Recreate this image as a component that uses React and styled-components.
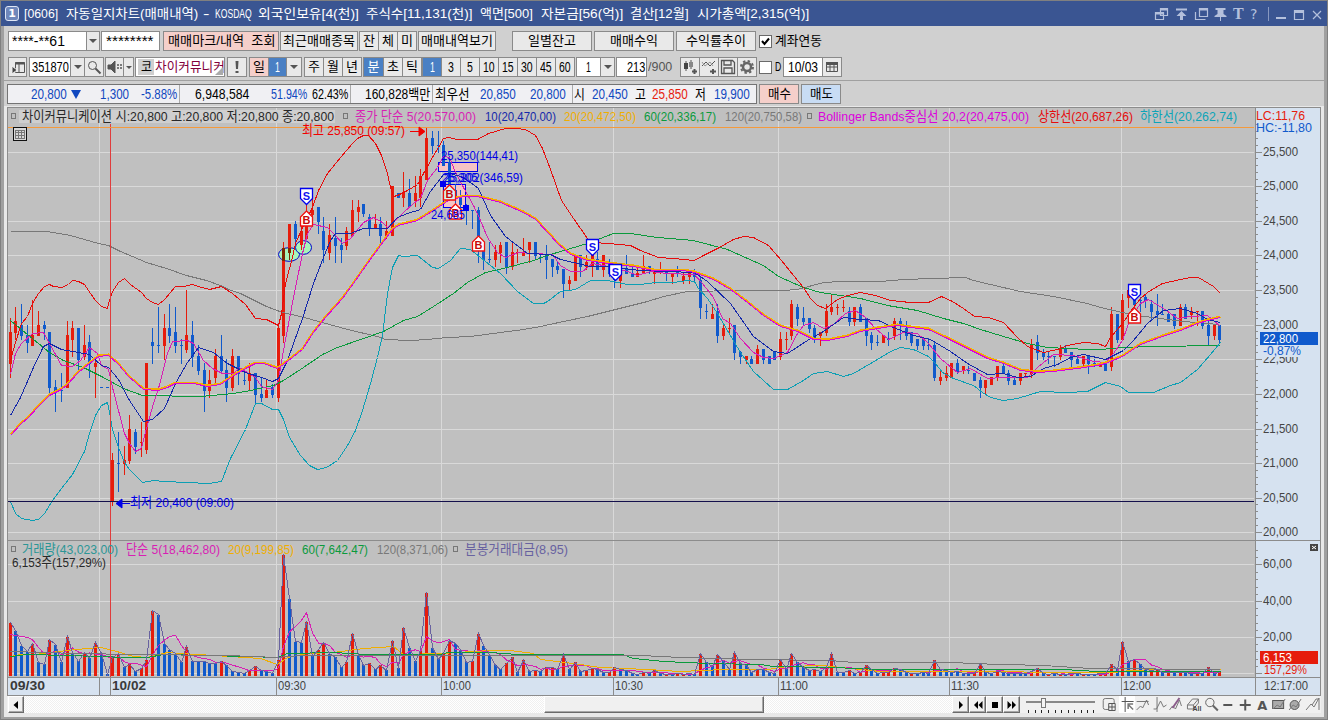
import React, { useLayoutEffect, useRef } from "react";
import styled, { createGlobalStyle, css } from "styled-components";

const FONT = `"Liberation Sans", "Noto Sans CJK KR", sans-serif`;

const Global = createGlobalStyle`
  * { box-sizing: border-box; }
  body { margin: 0; font-family: ${FONT}; font-size: 13px; overflow: hidden; }
`;

/* ---------- condensed text ---------- */
const FitBox = styled.span`
  display: inline-block;
  flex: none;
  width: ${(p) => p.$w}px;
  margin-left: ${(p) => p.$gap || 0}px;
  color: ${(p) => p.$color || "inherit"};
  white-space: nowrap;
  line-height: 16px;
`;
const FitInner = styled.span`
  display: inline-block;
  transform-origin: 0 50%;
  white-space: pre;
`;
function Fit({ w, gap, color, children }) {
  const ref = useRef(null);
  useLayoutEffect(() => {
    const natural = ref.current.offsetWidth;
    if (natural) ref.current.style.transform = `scaleX(${w / natural})`;
  }, [w, children]);
  return (
    <FitBox $w={w} $gap={gap} $color={color}>
      <FitInner ref={ref}>{children}</FitInner>
    </FitBox>
  );
}

/* ---------- window ---------- */
const Window = styled.div`
  width: 1328px;
  height: 720px;
  background: #d0d0d0;
  border: 1px solid #808080;
  display: flex;
  flex-direction: column;
`;
const TitleBar = styled.header`
  height: 25px;
  flex: none;
  background: #3a5592;
  color: #fff;
  display: flex;
  align-items: center;
  padding: 0 4px;
`;
const WindowNo = styled.span`
  width: 14px;
  height: 15px;
  border: 1px solid #dfe6f5;
  border-radius: 3px;
  background: #6f87bb;
  font: bold 11px/13px "DejaVu Sans", sans-serif;
  text-align: center;
  margin-right: 5px;
`;
const TitleIcons = styled.svg`
  margin-left: auto;
  display: block;
`;
const Frame = styled.div`
  flex: 1;
  border: 3px solid #a0a0a0;
  border-top: 0;
  border-bottom-width: 2px;
  display: flex;
  flex-direction: column;
  min-height: 0;
`;

/* ---------- toolbars ---------- */
const Toolbar = styled.div`
  display: flex;
  flex: none;
  align-items: flex-start;
  height: ${(p) => p.$h}px;
  padding: ${(p) => p.$top}px 0 0 4px;
  border-bottom: ${(p) => (p.$line ? "1px solid #a0a0a0" : "0")};
`;
const tones = {
  plain: css`background: #e9e9e9; color: #000;`,
  pink: css`background: #f5cfca; color: #000;`,
  blue: css`background: #4a80c4; color: #fff;`,
  sky: css`background: #c8dcf4; color: #000;`,
  white: css`background: #fff; color: #000;`,
};
const Box = styled.div`
  height: 20px;
  flex: none;
  width: ${(p) => p.$w}px;
  margin-left: ${(p) => p.$gap || 0}px;
  border: 1px solid #8a8a8a;
  display: flex;
  align-items: center;
  justify-content: ${(p) => p.$align || "center"};
  padding: 0 ${(p) => p.$pad || 0}px;
  ${(p) => tones[p.$tone || "plain"]}
`;
const Button = styled(Box).attrs({ as: "button", type: "button" })`
  font-family: inherit;
  font-size: ${(p) => (p.$num ? 14 : 13)}px;
`;
const Field = styled(Box).attrs({ $tone: "white" })`
  font-size: 14px;
`;
const NameField = styled(Field)`
  position: relative;
  overflow: hidden;
  font-size: 13px;
  &::after {
    content: "";
    position: absolute;
    right: 1px;
    bottom: 1px;
    border: 4px solid transparent;
    border-right-color: #aaa;
    border-bottom-color: #aaa;
  }
`;
const Arrow = styled.i`
  border: ${(p) => p.$s || 4}px solid transparent;
  border-top-color: #555;
  border-bottom-width: 0;
`;
const Check = styled.div`
  width: 13px;
  height: 13px;
  margin: 4px 0 0 ${(p) => p.$gap}px;
  border: 1px solid #6a6a6a;
  background: #fff;
  display: flex;
  flex: none;
`;
const Caption = styled.div`
  display: flex;
  align-items: center;
  height: 20px;
  margin-left: ${(p) => p.$gap}px;
  color: ${(p) => p.$color || "#000"};
`;
const Market = styled.span`
  background: #cfcfcf;
  width: 16px;
  height: 16px;
  flex: none;
  display: flex;
  align-items: center;
  justify-content: center;
  margin-right: 1px;
`;
const QuoteBox = styled.div`
  width: 750px;
  height: 20px;
  flex: none;
  border: 1px solid #747474;
  background: #f0f0f3;
  display: flex;
  align-items: center;
  margin-left: -1px;
  font-size: 14px;
`;
const Rule = styled.i`
  width: 1px;
  height: 18px;
  flex: none;
  background: #aaa;
  margin-left: ${(p) => p.$gap}px;
`;
const Down = styled.i`
  margin-left: 4px;
  border: 5px solid transparent;
  border-top: 9px solid #1048c0;
  border-bottom: 0;
`;

/* ---------- chart area ---------- */
const ChartArea = styled.main`
  flex: 1;
  background: #e8e8e8;
  padding: 1px 2px 0 3px;
  display: flex;
  flex-direction: column;
  min-height: 0;
`;
const ChartSvg = styled.svg`
  display: block;
  flex: none;
  font-family: ${FONT};
  font-size: 13.5px;
`;
const BottomBar = styled.div`
  display: flex;
  height: 17px;
  width: 1314px;
  background: #f0f0f0;
  align-items: stretch;
  padding-left: 1px;
`;
const Raised = styled.div`
  width: ${(p) => p.$w}px;
  flex: none;
  background: #f0f0f0;
  border: 1px solid;
  border-color: #fff #6a6a6a #6a6a6a #fff;
  box-shadow: inset -1px -1px #a8a8a8;
  display: flex;
  align-items: center;
  justify-content: center;
`;
const Track = styled.div`
  width: ${(p) => p.$w}px;
  flex: none;
  background: repeating-conic-gradient(#ffffff 0 25%, #f0f0f0 0 50%) 0 0 / 2px 2px;
`;

/* ---------- data ---------- */
const RED = "#e61c0c";
const BLUE = "#105acc";
// direction, high, body top, body bottom, low
const CANDLES = (
  "r 318 332 364 378|r 307 321 333 340|b 304 325 336 340|b 325 335 343 353|r 300 335 346 346|r 311 325 336 336|b 321 325 329 340|b 332 332 388 395|b 380 387 391 412|b 373 390 391 402|" +
  "r 321 335 388 388|r 321 328 340 357|b 328 328 360 371|r 325 345 357 360|b 335 342 364 378|r 359 363 367 398|b 387 387 388 388|b 387 387 388 388|r 453 460 501 506|b 432 463 464 492|" +
  "r 446 460 464 475|r 415 429 461 464|b 429 432 447 454|r 422 442 443 457|r 363 363 450 454|b 328 342 346 364|b 307 345 346 353|r 314 328 346 360|b 304 328 336 343|b 307 332 346 353|" +
  "b 339 345 346 364|r 290 335 350 353|b 321 335 357 367|b 345 356 371 375|b 363 370 391 412|r 370 380 391 398|r 349 356 378 385|b 335 356 371 374|b 359 370 388 402|r 349 356 388 391|" +
  "b 356 356 374 385|b 373 380 381 385|r 363 373 381 391|b 373 373 395 405|b 377 394 398 402|r 380 390 398 398|b 384 387 395 398|r 324 328 398 402|r 242 248 336 343|r 224 224 253 260|" +
  "b 221 224 239 250|r 225 231 245 250|r 204 224 239 239|r 197 210 215 225|b 207 207 222 234|b 217 231 250 263|r 224 235 253 260|b 217 238 246 263|b 238 245 250 263|r 227 231 246 250|" +
  "r 200 210 236 236|r 200 207 212 222|b 204 204 214 217|b 214 217 229 236|r 214 224 229 229|b 217 224 236 243|r 221 231 236 239|r 186 186 236 236|b 193 193 198 198|r 172 193 198 207|" +
  "b 179 193 207 208|r 176 193 201 207|r 169 176 198 207|r 128 138 180 180|b 131 138 146 154|b 131 145 146 153|b 141 145 166 166|b 156 162 184 200|b 184 190 198 210|b 190 197 205 215|" +
  "b 204 209 210 225|b 210 210 211 229|b 207 210 236 263|b 243 250 260 270|b 242 259 260 263|r 245 252 260 267|r 242 245 253 263|b 242 242 267 274|r 242 252 267 270|r 249 252 253 263|" +
  "r 238 252 256 256|r 242 242 250 263|b 242 242 256 260|b 253 257 258 263|b 245 255 260 279|b 259 259 267 277|b 261 266 270 274|b 269 269 284 298|r 276 280 284 291|r 254 255 281 281|" +
  "b 255 255 267 277|r 255 262 267 270|r 255 255 266 277|b 252 259 270 270|r 255 255 270 277|b 259 262 274 277|b 267 270 280 288|r 267 275 281 288|b 255 269 274 274|b 264 273 277 277|" +
  "r 266 273 277 277|r 255 266 273 274|b 266 266 269 274|r 269 269 274 284|r 262 269 270 274|b 269 269 274 281|r 273 273 277 284|b 266 270 273 277|r 273 276 281 284|r 273 273 277 284|" +
  "b 269 273 277 281|b 276 280 308 319|b 304 311 312 319|r 304 314 319 319|b 304 311 336 343|r 325 328 336 340|r 318 328 329 333|b 325 325 353 360|b 351 352 357 364|r 356 356 360 364|" +
  "b 356 359 364 364|r 345 349 364 364|b 349 349 360 364|b 356 356 364 364|b 352 352 360 360|r 332 339 357 360|r 332 339 340 350|r 300 304 336 340|b 304 307 319 326|b 307 318 322 326|" +
  "b 318 318 329 333|b 325 328 339 343|r 332 332 336 346|r 304 311 333 336|r 294 307 312 315|r 304 307 308 315|r 300 307 308 312|b 307 311 322 326|r 307 307 322 326|b 304 307 322 322|" +
  "b 318 318 336 346|b 332 335 343 350|b 335 342 343 346|r 335 335 343 343|b 332 339 340 346|r 318 321 336 340|b 318 321 326 340|b 321 328 336 340|b 332 332 343 346|b 339 339 346 350|" +
  "b 339 339 346 350|b 338 345 346 350|b 342 345 378 381|r 370 377 381 385|r 366 373 378 381|r 363 363 378 378|b 359 363 372 374|r 366 366 371 374|b 366 370 371 374|b 373 373 381 381|" +
  "b 377 380 388 398|r 380 380 388 395|r 377 377 385 385|r 366 366 378 381|b 363 366 374 374|b 370 373 381 385|b 377 380 385 385|r 373 373 381 385|r 373 373 374 378|r 339 345 374 378|" +
  "b 335 342 353 360|b 349 352 357 360|b 352 356 357 364|b 356 356 357 367|r 345 349 357 360|b 345 349 353 353|b 352 352 360 367|b 356 359 364 364|r 356 356 364 367|b 356 356 364 374|" +
  "b 359 363 364 367|r 363 363 367 367|b 363 363 371 371|r 307 314 367 371|b 314 314 340 343|r 294 300 340 340|r 288 290 298 308|b 295 298 305 310|b 297 300 301 312|b 294 297 301 308|" +
  "b 300 304 312 320|b 294 311 315 326|b 304 314 315 315|b 311 314 322 322|b 314 314 326 329|r 304 307 326 326|b 304 307 319 319|r 307 311 315 319|r 311 311 312 326|b 311 311 326 329|" +
  "b 321 325 336 346|r 325 325 336 340|b 325 325 340 343"
).split("|").map((s) => s.split(" "));

const VOLUMES = (
  "r53 b45 b30 b24 r32 b14 b12 r36 b31 b14 r39 b23 b15 r23 b18 r33 b22 b2 r19 r22 b9 r12 b5 r8 r16 r65 b61 b32 b26 b22 b14 r29 b15 b15 b15 b13 b13 r15 b11 b5 b4 b3 r6 r10 b6 b5 b3 r16 r121 b77 " +
  "b34 b33 r54 b20 r26 r33 b22 b19 b9 r14 r42 b21 b11 r13 b7 r11 b6 r35 b8 r48 b28 b15 r25 r83 b28 b17 r22 r35 b32 b26 b14 r15 r42 b30 b21 b11 b7 r13 r19 b4 r16 b5 r6 b5 r9 r9 b7 r21 b7 r14 " +
  "b5 r6 r8 b7 b4 r4 r9 b7 b6 b3 b2 r4 b3 r6 b3 r2 b2 r3 r2 b3 b2 r22 b14 b10 r21 b15 b7 r23 b13 b11 b4 r7 b7 b4 b3 r17 b7 r22 b14 b9 b6 r7 b5 r9 r22 b4 b4 r6 b3 r4 " +
  "r11 b7 b3 r4 r4 r8 b7 b4 r3 b3 b4 b3 r16 b7 b6 b4 b5 b3 b3 r3 r13 b4 b3 r5 b4 b3 b3 b3 b3 r5 r8 b3 r2 b3 r2 b2 r3 b3 r2 b2 b2 r3 r3 r12 b7 r34 b15 r17 b12 b7 " +
  "r6 r7 b4 r4 b4 r4 b4 b3 r3 b3 r9 b3 r4"
).split(" ").map((s) => ({ up: s[0] === "r", v: +s.slice(1) }));

const col = (i) => Math.floor(10 + 5.7075 * i);
const BASE = 676;
const turnover = VOLUMES.map((d, i) => `${col(i)},${BASE - d.v - (d.v > 20 ? 1 : 0)}`).join(" ");
const volMa5 = VOLUMES.map((_, i) => {
  const part = VOLUMES.slice(Math.max(0, i - 4), i + 1);
  const avg = i < 4 ? 42 - i : part.reduce((a, d) => a + d.v, 0) / part.length;
  return `${col(i)},${(BASE - avg).toFixed(1)}`;
}).join(" ");

const MID =
  "10,434 21,422 27,417 38,405 49,394 61,388 67,383 78,371 89,362 98,355 108,354 118,363 128,375 143,388 158,389 167,386 175,382 193,382 207,385 220,383 232,375 245,367 255,362 263,362 277,367 283,363 302,348 313,331 325,316 342,297 353,282 367,262 383,240 392,228 398,224 417,219 433,209 448,199 463,195 477,195 500,201 523,211 535,218 550,234 557,242 570,253 587,259 608,262 633,265 653,269 683,269 694,271 713,278 730,288 747,301 763,314 780,325 797,330 813,338 827,339 847,335 860,330 877,327 897,324 910,326 928,328 947,337 967,347 987,357 1003,362 1020,369 1037,371 1053,370 1077,367 1097,364 1105,362 1122,355 1140,343 1162,335 1180,329 1197,322 1207,319 1220,316";

const LINES = [
  { c: "#787878", p: "10,231 46,231 58,233 70,235 84,239 98,243 108,245 120,251 132,256 146,262 166,268 186,275 206,280 220,285 228,289 240,293 254,300 266,306 282,312 300,316 322,322 347,329 377,336 385,339 410,340 427,339 447,337 470,336 500,332 523,329 540,326 563,321 587,316 607,311 627,306 647,301 663,296 687,291 740,290 783,290 797,289 823,282 840,281 880,281 903,279 933,278 965,277 973,280 990,284 1020,291 1053,296 1087,303 1100,307 1122,312 1137,315 1160,318 1183,321 1210,323 1220,325" },
  { c: "#0a9a3c", p: "10,320 27,334 38,343 49,352 63,360 83,367 101,376 112,382 123,388 142,395 200,396 233,393 250,390 273,385 283,380 300,369 322,354 337,347 363,338 383,331 403,320 417,316 433,306 453,293 467,282 485,272 503,268 533,260 550,254 560,251 587,243 600,238 613,233 630,233 657,237 693,240 727,249 747,258 763,265 778,276 803,287 820,292 840,295 860,298 887,305 917,310 943,318 963,323 980,329 1003,336 1027,343 1047,347 1087,349 1100,349 1123,347 1153,346 1220,345" },
  { c: "#0c9fb4", p: "10,501 15,513 21,518 32,520 38,519 44,513 52,500 61,488 72,474 84,451 89,433 95,415 101,405 107,402 109,412 112,429 118,447 124,462 129,469 142,482 153,480 164,481 209,483 221,481 230,458 245,429 255,403 261,403 272,409 278,409 283,419 289,437 300,455 309,465 317,469 326,467 337,460 347,445 355,430 362,410 370,383 377,357 382,335 387,293 392,267 398,255 403,256 417,255 432,267 438,268 450,260 460,248 470,249 490,265 500,273 517,291 533,303 543,303 547,301 560,291 575,289 590,280 607,280 627,284 640,284 655,282 673,282 687,280 694,281 698,288 707,298 717,313 727,330 734,342 740,352 753,371 773,389 787,389 803,380 813,373 827,371 843,376 853,373 877,359 890,351 900,347 913,349 928,356 935,363 942,372 953,378 973,385 982,392 990,397 1003,400 1017,398 1040,391 1067,392 1087,391 1105,382 1120,386 1128,392 1153,392 1170,385 1180,382 1197,369 1210,354 1220,342" },
  { c: "#d81eb4", p: "10,374 15,353 21,343 32,333 43,332 49,343 61,365 72,366 80,360 89,347 97,353 101,365 108,369 112,387 118,410 124,433 129,443 135,451 141,448 146,428 153,403 158,388 167,353 172,341 187,340 193,343 203,360 212,368 222,373 233,373 239,367 247,372 255,377 261,386 272,389 278,380 283,350 293,297 302,253 307,233 313,224 327,227 335,235 342,243 350,238 363,222 373,217 382,222 387,227 393,222 403,212 413,203 420,198 427,180 437,167 443,156 449,157 455,172 463,187 473,205 480,220 487,237 497,252 505,257 518,252 533,253 552,254 560,265 570,271 582,271 592,263 608,266 627,271 637,275 650,271 667,273 694,274 702,283 713,297 722,318 730,323 740,338 753,352 763,357 773,358 787,352 797,333 803,325 813,322 823,328 833,324 845,313 855,310 865,317 875,328 888,339 903,332 917,333 928,343 940,358 957,372 970,368 987,378 1003,377 1027,377 1037,367 1053,354 1073,355 1093,361 1105,362 1113,353 1122,340 1130,318 1140,303 1148,299 1163,308 1177,318 1190,316 1207,315 1213,320 1220,326" },
  { c: "#1428aa", p: "10,415 20,397 33,367 43,346 49,343 61,349 78,352 89,354 101,365 108,367 118,379 129,400 143,421 152,419 164,408 175,383 187,362 198,347 213,352 227,363 245,372 261,377 272,381 278,378 287,360 293,343 302,318 313,283 323,257 330,240 335,233 350,233 363,228 387,228 397,217 407,213 420,209 430,191 443,174 450,173 463,177 478,188 490,215 505,236 527,253 550,254 560,259 573,262 590,266 608,266 623,268 640,270 667,271 694,272 707,281 730,303 753,336 773,351 787,353 807,340 823,331 843,317 860,319 878,320 893,327 913,335 930,339 950,351 967,363 987,374 1003,373 1017,377 1030,376 1043,368 1057,364 1070,357 1083,354 1105,359 1123,350 1133,340 1147,323 1163,310 1180,308 1197,313 1207,319 1220,322" },
  { c: "#f4ac00", p: MID, w: 2 },
  { c: "#dc00dc", p: MID, dy: 1 },
  { c: "#e60c0c", p: "10,360 15,342 21,323 27,316 32,303 38,293 44,286 49,284 53,286 61,287 68,284 72,280 78,281 84,284 90,293 95,300 101,306 107,308 109,300 112,291 118,282 124,278 130,284 141,292 146,298 152,302 158,304 164,299 175,286 183,286 192,284 198,286 209,289 221,286 232,293 245,304 255,318 266,319 278,325 281,313 285,283 292,257 295,243 302,227 312,207 318,190 327,173 340,157 352,143 357,138 363,135 368,135 375,143 381,155 387,173 390,187 393,196 397,195 407,190 417,184 423,173 432,157 438,147 443,138 448,137 457,139 477,139 488,133 505,128 516,128 525,129 535,135 542,148 550,169 561,200 567,209 573,218 587,238 593,242 608,243 630,245 640,250 658,257 673,258 694,260 703,255 717,248 733,239 743,236 753,237 768,245 781,260 793,275 803,287 810,298 817,305 825,308 837,299 847,295 860,292 875,295 890,300 910,302 928,302 941,296 952,301 963,308 974,316 988,317 1003,322 1017,337 1027,346 1043,352 1057,349 1067,345 1083,342 1097,343 1105,346 1110,337 1122,323 1133,307 1140,298 1147,292 1162,283 1180,279 1190,277 1198,277 1213,286 1220,293" },
];

const VOL_LINES = [
  { c: "#f0ae00", p: "10,656 20,654 35,654 67,650 87,648 100,647 113,650 133,656 147,657 167,652 197,654 230,656 260,658 277,664 287,657 307,653 333,652 363,648 393,646 403,654 440,653 490,650 510,650 533,653 540,659 573,663 600,667 647,669 680,671 723,669 767,669 787,666 823,665 850,668 880,671 930,671 1113,672 1130,670 1157,669 1220,669" },
  { c: "#0a9a3c", p: "10,656 27,654 67,655 127,657 147,657 163,654 247,656 277,657 287,653 333,652 367,654 440,654 447,652 490,652 517,654 622,654 633,658 663,661 707,663 760,664 773,666 833,667 880,669 1063,669 1097,671 1220,671" },
  { c: "#787878", p: "10,651 77,653 133,654 227,655 277,657 300,655 440,655 640,655 680,657 753,659 830,660 853,662 957,662 967,663 1043,665 1090,668 1220,669" },
];

const GRID_Y = [152, 186, 221, 255, 290, 325, 359, 394, 429, 463, 498, 532];
const PRICES = ["25,500", "25,000", "24,500", "24,000", "23,500", "23,000", "22,500", "22,000", "21,500", "21,000", "20,500", "20,000"];
const VOL_Y = [564, 601, 637, 673];
const TIMES = [
  [276, "09:30"],
  [441, "10:00"],
  [613, "10:30"],
  [778, "11:00"],
  [949, "11:30"],
  [1121, "12:00"],
];
// text, width, space before it
const TITLE = [
  ["[0606]", 34, 0],
  ["자동일지차트(매매내역)", 132, 8],
  ["-", 6, 5],
  ["KOSDAQ", 37, 6],
  ["외국인보유[4(천)]", 101, 6],
  ["주식수[11,131(천)]", 107, 7],
  ["액면[500]", 53, 7],
  ["자본금[56(억)]", 82, 8],
  ["결산[12월]", 59, 7],
  ["시가총액[2,315(억)]", 112, 8],
];

/* ---------- chart pieces ---------- */
const T = ({ x, y, w, c, b, children }) => (
  <text x={x} y={y} textLength={w} lengthAdjust="spacingAndGlyphs" fill={c} fontWeight={b ? "bold" : "normal"}>
    {children}
  </text>
);
const Bullet = ({ x, y }) => <rect x={x + 0.5} y={y + 0.5} width="4" height="5" fill="none" stroke="#777" />;
const Sell = ({ x, y }) => (
  <g>
    <path d={`M${x - 6} ${y}h12v10l-6 6l-6-6z`} fill="#fff" stroke="#0000f0" strokeWidth="1.3" />
    <text x={x} y={y + 11} textAnchor="middle" fontSize="11" fontWeight="bold" fill="#1414f0">S</text>
  </g>
);
const Buy = ({ x, y, fill = "#fff" }) => (
  <g>
    <path d={`M${x - 6} ${y + 15}h12v-9l-6-6l-6 6z`} fill={fill} stroke="#f01010" strokeWidth="1.3" />
    <text x={x} y={y + 13} textAnchor="middle" fontSize="11" fontWeight="bold" fill="#c80808">B</text>
  </g>
);
const Pane = ({ series }) =>
  series.map((l, i) => (
    <polyline key={i} points={l.p} fill="none" stroke={l.c} strokeWidth={l.w || 1} transform={l.dy ? `translate(0 ${l.dy})` : undefined} />
  ));

function Chart() {
  return (
    <ChartSvg width="1314" height="589" viewBox="7 107 1314 589">
      <g shapeRendering="crispEdges">
        <rect x="7" y="107" width="1314" height="589" fill="#8c8c8c" />
        <rect x="8" y="108" width="1247" height="432" fill="#c0c0c0" />
        <rect x="8" y="541" width="1247" height="136" fill="#c0c0c0" />
        <rect x="1256" y="108" width="64" height="432" fill="#d6e2f0" />
        <rect x="1256" y="541" width="64" height="136" fill="#d6e2f0" />
        <rect x="8" y="678" width="1247" height="17" fill="#d6e2f0" />
        <rect x="1256" y="678" width="64" height="17" fill="#d6e2f0" />
        <g fill="#d9d9d9">
          {GRID_Y.concat(VOL_Y).map((y) => <rect key={y} x="8" y={y} width="1246" height="1" />)}
          {[99].concat(TIMES.map((t) => t[0])).map((x) => (
            <React.Fragment key={x}>
              <rect x={x} y="108" width="1" height="432" />
              <rect x={x} y="541" width="1" height="136" />
            </React.Fragment>
          ))}
        </g>
        <g fill="#8c8c8c">
          {[99, 110].concat(TIMES.map((t) => t[0])).map((x) => <rect key={x} x={x} y="678" width="1" height="17" />)}
          {GRID_Y.map((y) => (
            <React.Fragment key={y}>
              <rect x="1256" y={y} width="6" height="1" />
              {[7, 14, 21, 28].map((d) => <rect key={d} x="1256" y={y - d} width="2" height="1" />)}
            </React.Fragment>
          ))}
          {VOL_Y.map((y) => (
            <React.Fragment key={y}>
              <rect x="1256" y={y} width="6" height="1" />
              {(y === 564 ? [7, 14] : [7, 14, 22, 29]).map((d) => <rect key={d} x="1256" y={y - d} width="2" height="1" />)}
            </React.Fragment>
          ))}
        </g>
        <rect x="19" y="110" width="316" height="13" fill="#cfcfcf" />
        <rect x="438.5" y="162.5" width="39" height="9" fill="#f5c4c4" stroke="#0000f0" />
        <rect x="443.5" y="184.5" width="22" height="23" fill="#f5c4c4" stroke="#0000f0" />
      </g>
      <ellipse cx="289" cy="254.5" rx="10.5" ry="6.8" fill="#a8f4b8" stroke="#0000d0" />
      <ellipse cx="303.5" cy="247.5" rx="8" ry="6.8" fill="#a8f4b8" stroke="#0000d0" />
      <g shapeRendering="crispEdges">
        {CANDLES.map(([k, h, t, b, l], i) => (
          <g key={i} fill={k === "r" ? RED : BLUE}>
            <rect x={col(i)} y={h} width="1" height={l - h} />
            <rect x={col(i) - 1} y={t} width="3" height={b - t} />
          </g>
        ))}
        <rect x="282" y="248" width="3" height="13" fill="#7c2800" />
        <rect x="288" y="248" width="3" height="5" fill="#7c2800" />
        <rect x="289" y="253" width="1" height="7" fill="#7c2800" />
        <g transform="translate(0.5 0.5)"><Pane series={LINES} /></g>
        {VOLUMES.map((d, i) => (
          <rect key={i} x={col(i) - 1} y={BASE - d.v} width="3" height={d.v} fill={d.up ? RED : BLUE} />
        ))}
        <g transform="translate(0.5 0.5)">
          <polyline points={volMa5} fill="none" stroke="#d81eb4" />
          <Pane series={VOL_LINES} />
          <polyline points={turnover} fill="none" stroke="#6862a0" />
        </g>
        <rect x="110" y="124" width="1" height="553" fill="#e03c3c" />
        <rect x="8" y="127" width="1246" height="1" fill="#f49a3c" />
        <rect x="8" y="501" width="1246" height="1" fill="#14104c" />
        <rect x="13.5" y="127.5" width="13" height="13" fill="#d8d8d8" stroke="#111" />
        <path d="M15.5 130.5h9v8h-9zM15 132.5h10M15 135.5h10M18.5 130v9M21.5 130v9" fill="none" stroke="#777" />
      </g>

      <Bullet x={11} y={113} />
      <T x={22} y={121} w={312} c="#282828">차이커뮤니케이션 시:20,800 고:20,800 저:20,800 종:20,800</T>
      <Bullet x={343} y={113} />
      <T x={355} y={121} w={121} c="#d81eb4">종가 단순 5(20,570,00)</T>
      <T x={485} y={121} w={71} c="#1428aa">10(20,470,00)</T>
      <T x={564} y={121} w={72} c="#f0ae00">20(20,472,50)</T>
      <T x={644} y={121} w={72} c="#0a9a3c">60(20,336,17)</T>
      <T x={725} y={121} w={77} c="#787878">120(20,750,58)</T>
      <Bullet x={807} y={113} />
      <T x={818} y={121} w={211} c="#dc00dc">Bollinger Bands중심선 20,2(20,475,00)</T>
      <T x={1038} y={121} w={95} c="#e60c0c">상한선(20,687,26)</T>
      <T x={1140} y={121} w={97} c="#0ca4b8">하한선(20,262,74)</T>

      <T x={302} y={135} w={103} c="#f00000">최고 25,850 (09:57)</T>
      <path d="M410 131.5h9M419 127v9l6-4.500z" fill="#f00000" stroke="#f00000" />
      <T x={130} y={507} w={104} c="#0000e6">최저 20,400 (09:00)</T>
      <path d="M130 503.500h-9M122 499v9l-6-4.500z" fill="#0000e6" stroke="#0000e6" />
      <T x={441} y={160} w={77} c="#0000e6">25,350(144,41)</T>
      <T x={442} y={182} w={36} c="#0000e6">25,305</T>
      <T x={444} y={182} w={79} c="#0000e6">25,202(346,59)</T>
      <Buy x={455.500} y={204} />
      <T x={431} y={219} w={34} c="#0000e6">24,685</T>
      <rect x="440" y="181" width="6" height="6" fill="#0000f0" />
      <rect x="463" y="205" width="6" height="6" fill="#0000f0" />
      <Buy x={306.500} y={211} />
      <Buy x={449.500} y={185} fill="#d8f8f4" />
      <Buy x={478.500} y={236} />
      <Buy x={1134.500} y={308} />
      <Sell x={306.500} y={188.500} />
      <Sell x={592.500} y={239.500} />
      <Sell x={615.500} y={264.500} />
      <Sell x={1134.500} y={284.500} />

      <T x={1256} y={120} w={49} c="#e61c0c">LC:11,76</T>
      <T x={1256} y={132} w={56} c="#105acc">HC:-11,80</T>
      {PRICES.map((p, i) => <T key={p} x={1263} y={GRID_Y[i] + 4} w={35} c="#444">{p}</T>)}
      <rect x="1260" y="332" width="58" height="13" fill="#105acc" />
      <T x={1263} y={343} w={35} c="#fff">22,800</T>
      <rect x="1260" y="345" width="58" height="12" fill="#d6e2f0" />
      <T x={1263} y={355} w={38} c="#105acc">-0,87%</T>

      <Bullet x={11} y={546} />
      <T x={22} y={554} w={96} c="#2c9696">거래량(43,023,00)</T>
      <T x={126} y={554} w={94} c="#d81eb4">단순 5(18,462,80)</T>
      <T x={228} y={554} w={66} c="#f0ae00">20(9,199,85)</T>
      <T x={302} y={554} w={66} c="#0a9a3c">60(7,642,47)</T>
      <T x={377} y={554} w={71} c="#787878">120(8,371,06)</T>
      <Bullet x={453} y={546} />
      <T x={465} y={554} w={103} c="#6862a0">분봉거래대금(8,95)</T>
      <T x={12} y={567} w={94} c="#282828">6,153주(157,29%)</T>
      <T x={1263} y={568} w={29} c="#444">60,00</T>
      <T x={1263} y={605} w={29} c="#444">40,00</T>
      <T x={1263} y={641} w={29} c="#444">20,00</T>
      <rect x="1260" y="651" width="58" height="13" fill="#e61c0c" />
      <T x={1263} y={662} w={29} c="#fff">6,153</T>
      <T x={1264} y={674} w={43} c="#e61c0c">157,29%</T>
      <rect x="1310" y="544" width="8" height="7" fill="#444" />
      <path d="M1312 546l4 3M1316 546l-4 3" stroke="#fff" />

      <T x={10} y={690} w={35} c="#3a3a3a" b>09/30</T>
      <T x={112} y={690} w={34} c="#3a3a3a" b>10/02</T>
      {TIMES.map(([x, t]) => <T key={t} x={x + 2} y={690} w={28} c="#444">{t}</T>)}
      <T x={1264} y={690} w={44} c="#444">12:17:00</T>
    </ChartSvg>
  );
}

/* ---------- icons ---------- */
const IconSvg = styled.svg`
  flex: none;
`;
const Icon = ({ w = 16, h = 16, children }) => (
  <IconSvg width={w} height={h} viewBox={`0 0 ${w} ${h}`} fill="none" stroke="#555">{children}</IconSvg>
);

function BottomTools() {
  return (
    <svg width="302" height="17" viewBox="1019 696 302 17" fill="none" stroke="#777">
      <g shapeRendering="crispEdges">
        <rect x="1025" y="701" width="69" height="2" fill="#888" stroke="none" />
        <rect x="1041" y="698" width="4" height="10" fill="#f4f4f4" stroke="#777" strokeWidth="1" />
        {[1027, 1034, 1040, 1047, 1054, 1060, 1067, 1073, 1080, 1086, 1092].map((x) => (
          <rect key={x} x={x} y="710" width="1" height="3" fill="#222" stroke="none" />
        ))}
        <rect x="1118" y="696" width="16" height="17" fill="#fff" stroke="none" />
      </g>
      <rect x="1102.500" y="698.500" width="11" height="11" rx="2" />
      <path d="M1108 703.500h6.500v7h-6.500zM1108 707h6.500M1111.300 703v7" fill="#f0f0f0" stroke="#555" />
      <path d="M1121 701.500h12M1124.500 697v15" stroke="#555" />
      <path d="M1127.500 704.500l5 5M1127.500 709v-5h5" strokeWidth="1.500" />
      <path d="M1136 701.500h12M1136 710l4-4 2 2 4-8 2 5" strokeDasharray="12 0" />
      <path d="M1156.500 697v15M1153 709h3l4-8 3 6 3-2" />
      <path d="M1169 710l3-4 3 3 4-9 2 6" /><path d="M1172 708l7-10" stroke="#8a5c8a" strokeWidth="2" />
      <path d="M1187 705l5-6h6l-5 6h-6zM1187 705v4h6v-4M1193 709l5-6v-4" />
      <text x="1192" y="711" fontSize="7" fontWeight="bold" fill="#444" stroke="none">All</text>
      <circle cx="1209.500" cy="702.500" r="4.200" stroke="#666" /><path d="M1212.500 705.500l5 5" strokeWidth="2" stroke="#666" />
      <path d="M1223 705h9M1239.500 705h11M1245 699.500v11" strokeWidth="2" stroke="#555" />
      <text x="1257" y="710" fontSize="13" fontWeight="bold" fill="#555" stroke="none" fontFamily="DejaVu Sans">A</text>
      <rect x="1272.500" y="700.500" width="11" height="8" fill="#aaa" stroke="#555" />
      <path d="M1273 709l4-4 3 2 5-8" />
      <circle cx="1294.500" cy="705" r="4.500" fill="#aaa" stroke="#555" /><path d="M1289 710l4-5 3 2 5-8" />
      <path d="M1306 710l5-6 3 3 5-9v12M1312 705l4-6 3 0" />
    </svg>
  );
}

export default function App() {
  return (
    <Window>
      <Global />
      <TitleBar>
        <WindowNo>1</WindowNo>
        {TITLE.map(([text, w, gap]) => <Fit key={text} w={w} gap={gap}>{text}</Fit>)}
        <TitleIcons width="170" height="20" viewBox="1152 3 170 20" fill="none" stroke="#b4c0dc" strokeWidth="1.2">
          <path d="M1159.500 7.500h7v7h-7zM1154.500 11.500h8v7h-8z" fill="#3a5592" />
          <path d="M1159 8.500h8M1154 12.500h8M1175 8.500h11" strokeWidth="2" />
          <path d="M1180.500 10l5 5h-3.500v4h-3v-4h-3.500z" fill="#b4c0dc" stroke="none" />
          <path d="M1198.500 7.500h8v8h-8zM1194.500 11v7.500h10" />
          <path d="M1198 8.500h9" strokeWidth="2" />
          <path d="M1214.500 7h10v2h-2v4l3 2v1h-12v-1l3-2v-4h-2zM1219 16h1v4h-1z" fill="#b4c0dc" stroke="none" />
          <text x="1232" y="18" fontFamily="Liberation Serif" fontSize="16" fontWeight="bold" fill="#b4c0dc" stroke="none">T</text>
          <text x="1249" y="18" fontFamily="DejaVu Sans" fontSize="14" fill="#b4c0dc" stroke="none">?</text>
          <path d="M1267.500 6v14" strokeWidth="1" stroke="#8898c0" />
          <path d="M1275 17h10" strokeWidth="2" />
          <path d="M1293.500 9.500h9v9h-9z" /><path d="M1293 10.500h10" strokeWidth="3" />
          <path d="M1312 10l8 8M1320 10l-8 8" />
        </TitleIcons>
      </TitleBar>
      <Frame>
        <Toolbar $h={26} $top={5}>
          <Field $w={79} $align="flex-start" $pad={3}><Fit w={53}>****-**61</Fit></Field>
          <Button $w={14} $gap={-1}><Arrow /></Button>
          <Field $w={59} $gap={1} $align="flex-start" $pad={4}><Fit w={48}>********</Fit></Field>
          <Button $w={116} $gap={3} $tone="pink"><Fit w={108}>매매마크/내역  조회</Fit></Button>
          <Button $w={78} $gap={1}><Fit w={72}>최근매매종목</Fit></Button>
          <Button $w={20} $gap={1}><Fit w={12}>잔</Fit></Button>
          <Button $w={20} $gap={-1}><Fit w={12}>체</Fit></Button>
          <Button $w={20} $gap={-1}><Fit w={12}>미</Fit></Button>
          <Button $w={78} $gap={1}><Fit w={72}>매매내역보기</Fit></Button>
          <Button $w={80} $gap={16}><Fit w={48}>일별잔고</Fit></Button>
          <Button $w={80} $gap={2}><Fit w={48}>매매수익</Fit></Button>
          <Button $w={80} $gap={2}><Fit w={60}>수익률추이</Fit></Button>
          <Check $gap={3}><Icon w={11} h={11}><path d="M2 5l2.500 3L9 2.500" stroke="#000" strokeWidth="2" /></Icon></Check>
          <Caption $gap={3}><Fit w={47}>계좌연동</Fit></Caption>
        </Toolbar>
        <Toolbar $h={29} $top={5} $line>
          <Button $w={19}><Icon><path d="M5.500 3.500h9v10h-9zM9 3v10" /><path d="M5 4.500h10" strokeWidth="2" /><path d="M2 7l5 4-5 4z" fill="#444" stroke="#eee" /></Icon></Button>
          <Field $w={42} $gap={2}><Fit w={37}>351870</Fit></Field>
          <Button $w={15} $gap={-1}><Arrow /></Button>
          <Button $w={20} $gap={-1}><Icon><circle cx="6.500" cy="6.500" r="4" /><path d="M9.500 9.500l5 5" strokeWidth="2" /></Icon></Button>
          <Button $w={19} $gap={1}><Icon><path d="M1 6h3l4-4v12l-4-4H1z" fill="#555" /><path d="M10 6h2M10 9h2M13 6h2M13 9h2" strokeWidth="1.500" /></Icon></Button>
          <Button $w={11} $gap={-1}><Arrow $s={3} /></Button>
          <NameField $w={90} $gap={1} $align="flex-start" $pad={2}><Market><Fit w={11}>코</Fit></Market><Fit w={70} color="#82003c">차이커뮤니커</Fit></NameField>
          <Button $w={20} $gap={2}><Icon><path d="M6.500 2h3l-.5 8h-2zM6.500 12h3v2h-3z" fill="#555" stroke="none" /></Icon></Button>
          <Button $w={20} $gap={2} $tone="pink"><Fit w={12}>일</Fit></Button>
          <Button $w={19} $gap={-1} $tone="blue" $num><Fit w={5}>1</Fit></Button>
          <Button $w={16} $gap={-1}><Arrow /></Button>
          <Button $w={20} $gap={2}><Fit w={12}>주</Fit></Button>
          <Button $w={20} $gap={-1}><Fit w={12}>월</Fit></Button>
          <Button $w={20} $gap={-1}><Fit w={12}>년</Fit></Button>
          <Button $w={21} $gap={1} $tone="blue"><Fit w={12}>분</Fit></Button>
          <Button $w={20} $gap={-1}><Fit w={12}>초</Fit></Button>
          <Button $w={20} $gap={-1}><Fit w={12}>틱</Fit></Button>
          <Button $w={20} $gap={0} $tone="blue" $num><Fit w={5}>1</Fit></Button>
          {["3", "5", "10", "15", "30", "45", "60"].map((n) => (
            <Button key={n} $w={20} $gap={-1} $num><Fit w={6 * n.length}>{n}</Fit></Button>
          ))}
          <Field $w={25} $gap={1}><Fit w={5}>1</Fit></Field>
          <Button $w={15} $gap={-1}><Arrow /></Button>
          <Field $w={31} $gap={1} $align="flex-end" $pad={1}><Fit w={18}>213</Fit></Field>
          <Caption $gap={1} $color="#555"><Fit w={24}>/900</Fit></Caption>
          <Button $w={20} $gap={8}><Icon><path d="M4 2v10M9 1v9" /><path d="M2 4h4v6H2z" fill="#444" stroke="none" /><path d="M7 3h4v5H7z" fill="#888" stroke="none" /><path d="M10 12.500h5M12.500 10v5" strokeWidth="2" /></Icon></Button>
          <Button $w={20} $gap={-1}><Icon><path d="M1 7l4-4 4 4 5-5" /><path d="M1 3l3 4 5-4 3 4" stroke="#999" /><path d="M9 12.500h6M12 10v5" strokeWidth="2" /></Icon></Button>
          <Button $w={20} $gap={-1}><Icon><path d="M1.500 1.500h11l2 2v11h-13zM4 2v4h7V2M4 14V9h8v5" strokeWidth="1.300" /></Icon></Button>
          <Button $w={20} $gap={-1}><Icon><circle cx="8" cy="8" r="4" strokeWidth="2.500" stroke="#666" /><circle cx="8" cy="8" r="6" strokeWidth="2" strokeDasharray="2.400 2.300" stroke="#666" /></Icon></Button>
          <Check $gap={2} />
          <Caption $gap={3}><Fit w={6}>D</Fit></Caption>
          <Field $w={40} $gap={2}><Fit w={30}>10/03</Fit></Field>
          <Button $w={20} $gap={-1}><Icon><path d="M2.500 3.500h11v9h-11zM2 8h11M6 5v8M10 5v8" /><path d="M2 4.500h12" strokeWidth="3" /></Icon></Button>
        </Toolbar>
        <Toolbar $h={25} $top={3}>
          <QuoteBox>
            <Fit w={36} gap={23} color="#1048c0">20,800</Fit><Down />
            <Fit w={29} gap={19} color="#1048c0">1,300</Fit>
            <Fit w={36} gap={12} color="#1048c0">-5.88%</Fit><Rule $gap={2} />
            <Fit w={54} gap={15}>6,948,584</Fit>
            <Fit w={36} gap={22} color="#1048c0">51.94%</Fit>
            <Fit w={36} gap={5}>62.43%</Fit><Rule $gap={2} />
            <Fit w={65} gap={14}>160,828백만</Fit><Rule $gap={2} />
            <Fit w={35} gap={2}>최우선</Fit>
            <Fit w={36} gap={10} color="#1048c0">20,850</Fit>
            <Fit w={36} gap={14} color="#1048c0">20,800</Fit><Rule $gap={6} />
            <Fit w={11} gap={1}>시</Fit>
            <Fit w={36} gap={7} color="#1048c0">20,450</Fit>
            <Fit w={11} gap={7}>고</Fit>
            <Fit w={36} gap={6} color="#e61c0c">25,850</Fit>
            <Fit w={11} gap={7}>저</Fit>
            <Fit w={36} gap={8} color="#1048c0">19,900</Fit>
          </QuoteBox>
          <Button $w={40} $gap={2} $tone="pink"><Fit w={23}>매수</Fit></Button>
          <Button $w={40} $gap={2} $tone="sky"><Fit w={23}>매도</Fit></Button>
        </Toolbar>
        <ChartArea>
          <Chart />
          <BottomBar>
            <Raised $w={16}><Icon w={10} h={10}><path d="M7 1v8L2.500 5z" fill="#000" stroke="none" /></Icon></Raised>
            <Track $w={520} />
            <Raised $w={220} />
            <Track $w={188} />
            <Raised $w={17}><Icon w={10} h={10}><path d="M3 1v8l4-4z" fill="#000" stroke="none" /></Icon></Raised>
            <Raised $w={17}><Icon w={10} h={10}><path d="M5 1v8L1 5zM9.500 1v8l-4-4z" fill="#000" stroke="none" transform="translate(0 0)" /></Icon></Raised>
            <Raised $w={17}><Icon w={10} h={10}><path d="M2 2h6v6H2z" fill="#000" stroke="none" /></Icon></Raised>
            <Raised $w={17}><Icon w={10} h={10}><path d="M.5 1v8l4-4zM5 1v8l4-4z" fill="#000" stroke="none" /></Icon></Raised>
            <BottomTools />
          </BottomBar>
        </ChartArea>
      </Frame>
    </Window>
  );
}
